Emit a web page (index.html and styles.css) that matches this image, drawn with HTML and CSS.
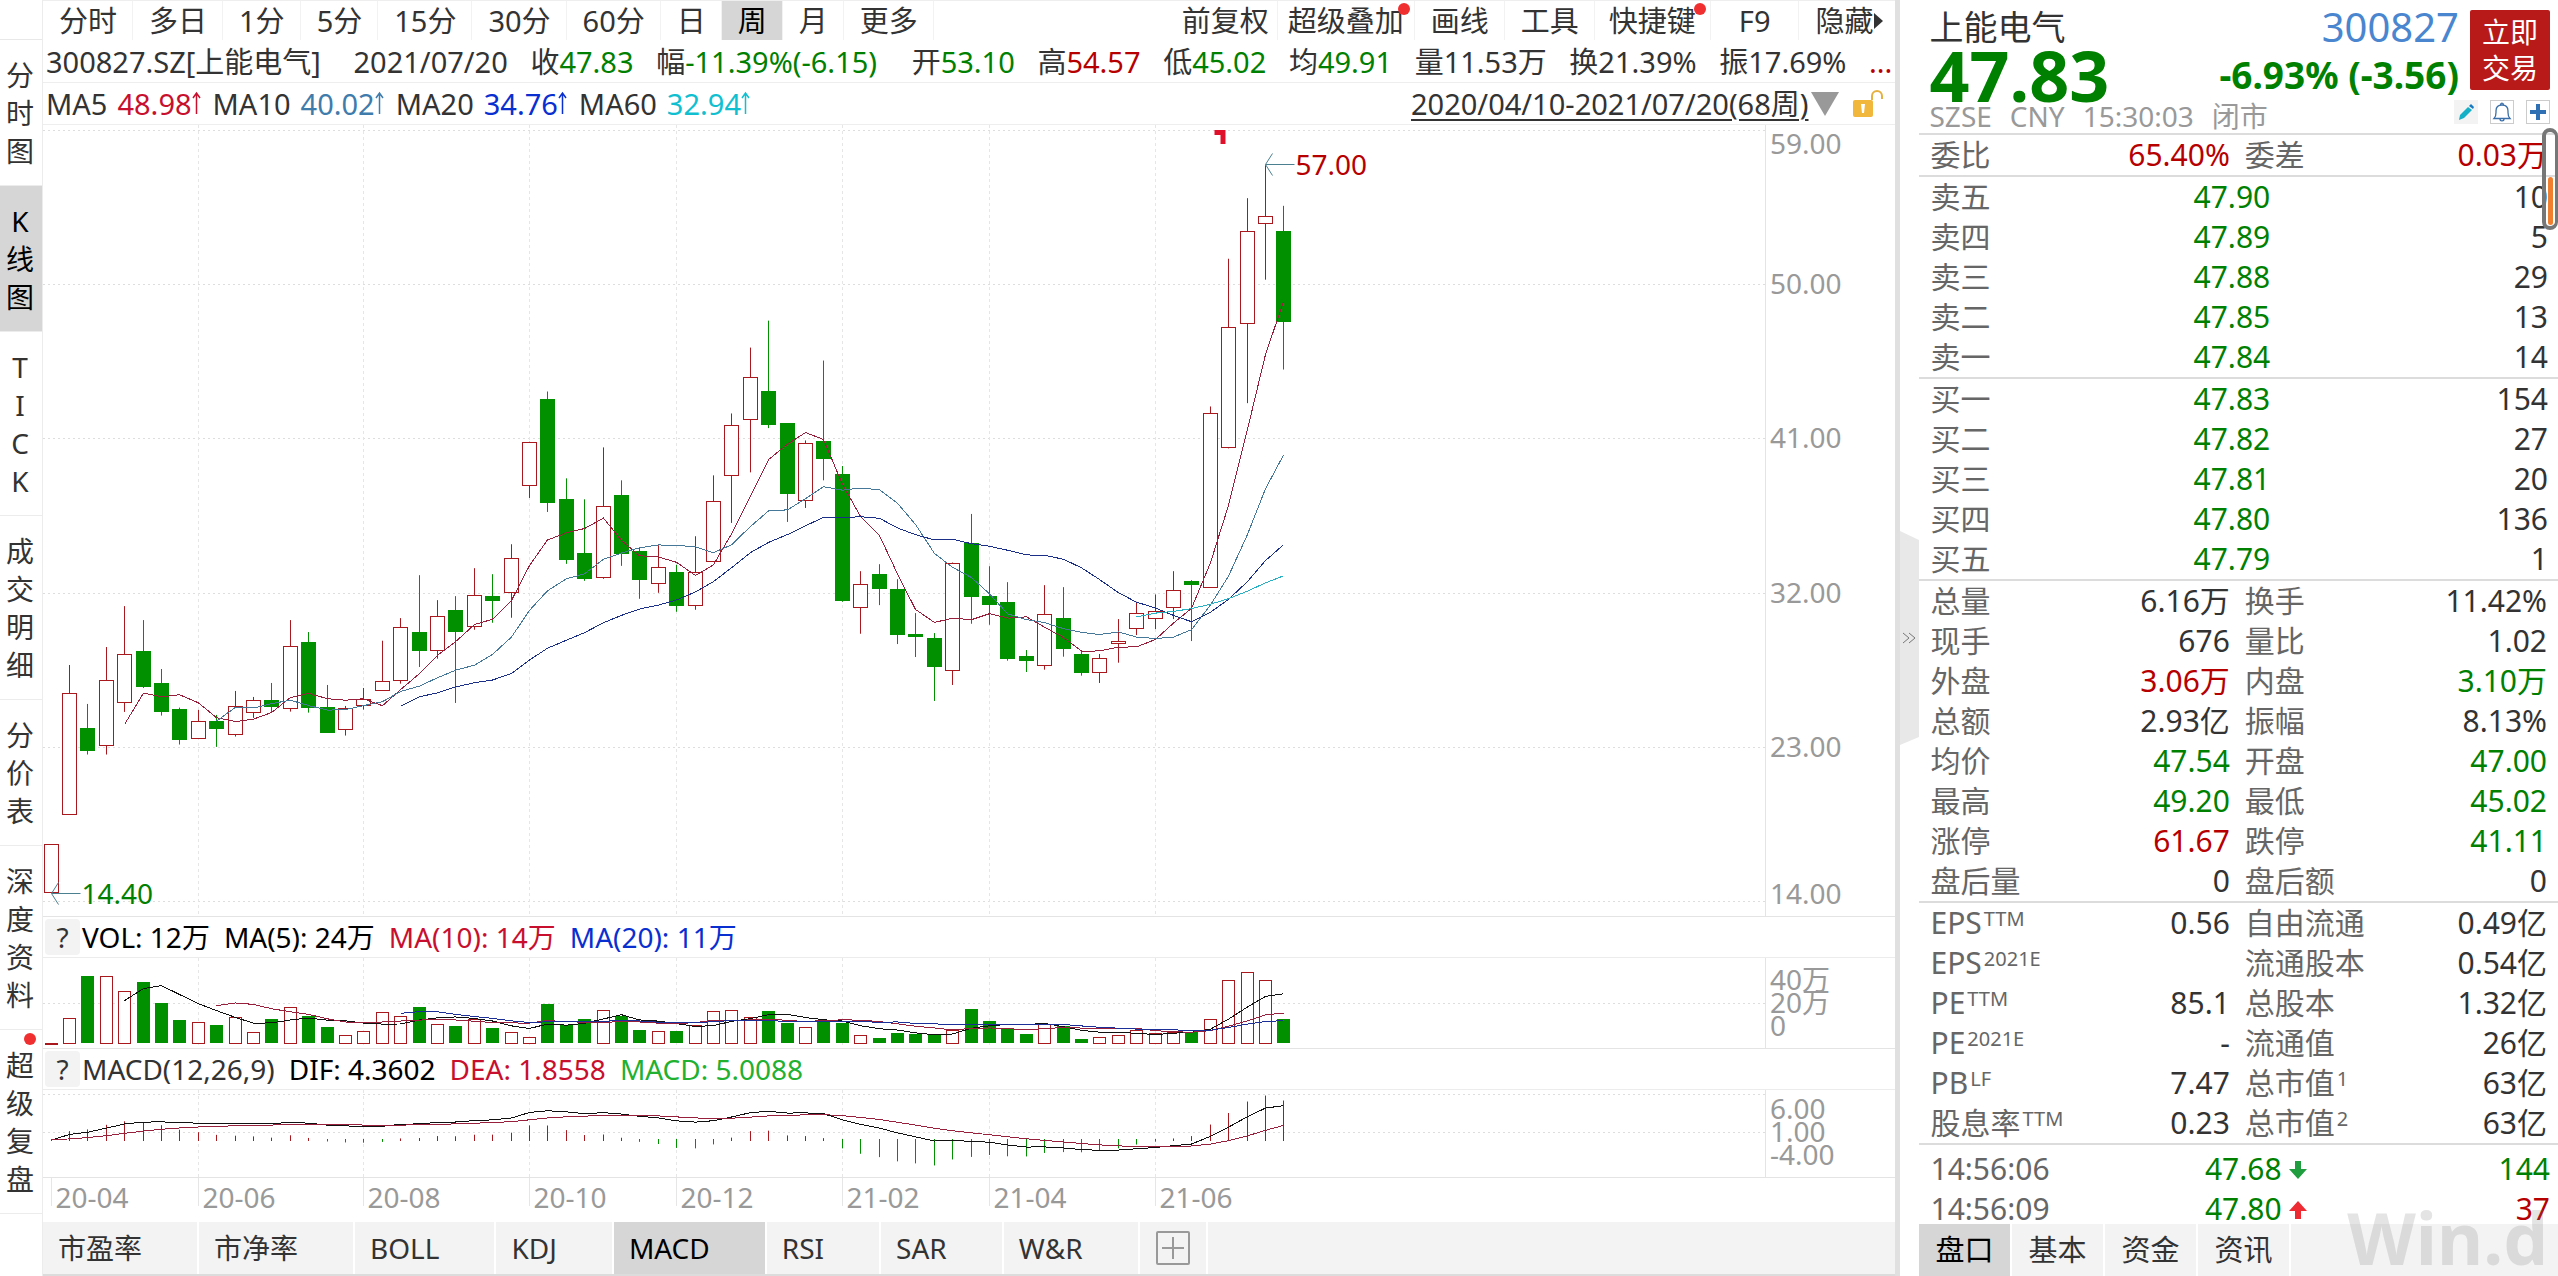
FILE: index.html
```html
<!DOCTYPE html>
<html lang="zh-CN">
<head>
<meta charset="utf-8">
<title>上能电气 300827</title>
<link rel="stylesheet" href="styles.css">
</head>
<body>
<div class="app">
  <nav class="side">
    <div class="side-head"></div>
    <button class="side-tab">分时图</button>
    <button class="side-tab on">K线图</button>
    <button class="side-tab">T<br>I<br>C<br>K</button>
    <button class="side-tab">成交明细</button>
    <button class="side-tab">分价表</button>
    <button class="side-tab">深度资料</button>
    <button class="side-tab dot">超级复盘</button>
  </nav>

  <main class="chart">
    <div class="toolbar">
      <button>分时</button><button>多日</button><button>1分</button><button>5分</button><button>15分</button><button>30分</button><button>60分</button><button>日</button><button class="on">周</button><button>月</button><button>更多</button>
      <span class="spacer"></span>
      <button class="tight">前复权</button><button class="snug badge">超级叠加</button><button>画线</button><button>工具</button><button class="mid badge">快捷键</button><button class="wide">F9</button><button class="hide">隐藏<svg width="9" height="16" viewBox="0 0 9 16"><path d="M0 0L9 8L0 16Z" fill="#333"/></svg></button>
    </div>
    <div class="quote">
      <span class="code">300827.SZ[上能电气]</span>
      <span>2021/07/20</span>
      <span>收<b class="dn">47.83</b></span>
      <span class="pct">幅<b class="dn">-11.39%(-6.15)</b></span>
      <span>开<b class="dn">53.10</b></span>
      <span>高<b class="up">54.57</b></span>
      <span>低<b class="dn">45.02</b></span>
      <span>均<b class="dn">49.91</b></span>
      <span>量11.53万</span>
      <span>换21.39%</span>
      <span>振17.69%</span>
      <span class="up">...</span>
    </div>
    <div class="mas">
      <span>MA5</span><span class="val m5">48.98<svg class="arr" viewBox="0 0 9 24"><path d="M4.500 23V2M1 7L4.500 2L8 7"/></svg></span>
      <span>MA10</span><span class="val m10">40.02<svg class="arr" viewBox="0 0 9 24"><path d="M4.500 23V2M1 7L4.500 2L8 7"/></svg></span>
      <span>MA20</span><span class="val m20">34.76<svg class="arr" viewBox="0 0 9 24"><path d="M4.500 23V2M1 7L4.500 2L8 7"/></svg></span>
      <span>MA60</span><span class="val m60">32.94<svg class="arr" viewBox="0 0 9 24"><path d="M4.500 23V2M1 7L4.500 2L8 7"/></svg></span>
      <span class="spacer"></span>
      <a href="#range" class="range">2020/04/10-2021/07/20(68周)</a>
      <svg class="caret" width="28" height="24" viewBox="0 0 28 24"><path d="M0 0H28L14 24Z" fill="#999"/></svg>
      <svg class="lock" width="30" height="28" viewBox="0 0 30 28"><rect x="0" y="10" width="20" height="17" rx="2" fill="#f0b73c"/><path d="M19 10V6a5 5 0 0 1 10 0V9" fill="none" stroke="#e6b040" stroke-width="2"/><path d="M8 14h4l-1 9h-2z" fill="#fff"/></svg>
    </div>
    <div class="plot main-plot"><svg id="kline"></svg></div>
    <div class="legend">
      <button class="help">?</button>
      <span class="k">VOL: 12万</span><span class="k">MA(5): 24万</span><span class="m5">MA(10): 14万</span><span class="m20">MA(20): 11万</span>
    </div>
    <div class="plot vol-plot"><svg id="volume"></svg></div>
    <div class="legend">
      <button class="help">?</button>
      <span>MACD(12,26,9)</span><span class="k">DIF: 4.3602</span><span class="m5">DEA: 1.8558</span><span class="macd">MACD: 5.0088</span>
    </div>
    <div class="plot macd-plot"><svg id="macd"></svg></div>
    <div class="plot dates"><svg id="dates"></svg></div>
    <div class="tabs">
      <button>市盈率</button><button>市净率</button><button>BOLL</button><button>KDJ</button><button class="on">MACD</button><button>RSI</button><button>SAR</button><button>W&amp;R</button><button class="add" aria-label="添加指标"><svg width="34" height="34" viewBox="0 0 34 34"><rect x="1" y="1" width="32" height="32" rx="1" fill="none" stroke="#999" stroke-width="2"/><path d="M17 6V28M6 17H28" stroke="#999" stroke-width="2"/></svg></button>
    </div>
  </main>

  <button class="divider" aria-label="收起"><svg width="19" height="214" viewBox="0 0 19 214"><path d="M0 0L19 9V206L0 214Z" fill="#e8e8e8"/><path d="M3 102L9 107L3 112M9 102L15 107L9 112" fill="none" stroke="#777"/></svg></button>

  <aside class="panel">
    <header class="head">
      <div class="info">
        <div class="row1"><span class="name">上能电气</span><span class="num">300827</span></div>
        <div class="row2"><span class="price">47.83</span><span class="chg">-6.93% (-3.56)</span></div>
      </div>
      <button class="trade">立即<br>交易</button>
      <div class="status">
        <span>SZSE</span><span>CNY</span><span>15:30:03</span><span>闭市</span>
        <div class="icons">
          <svg width="24" height="24" viewBox="0 0 24 24"><rect width="24" height="24" fill="#f3f3f3"/><path d="M5 20L6 15L14 7L18 10L10 18Z" fill="#14b0c8"/><path d="M15 6L17 4L20 7L19 9Z" fill="#1479c0"/></svg>
          <svg width="24" height="24" viewBox="0 0 24 24"><rect x=".5" y=".5" width="23" height="23" fill="#fff" stroke="#ccc"/><path d="M4 18.500H20C17.500 16 18 14 18 11C18 7 15.500 5 12 5C8.500 5 6 7 6 11C6 14 6.500 16 4 18.500ZM10.500 5C10.500 2.500 13.500 2.500 13.500 5M10 19C10 21.500 14 21.500 14 19" fill="none" stroke="#3a6ea8" stroke-width="1.300"/></svg>
          <svg width="24" height="24" viewBox="0 0 24 24"><rect x=".5" y=".5" width="23" height="23" fill="#fff" stroke="#ccc"/><path d="M12 4V20M4 12H20" stroke="#2f6fb3" stroke-width="4"/></svg>
        </div>
      </div>
    </header>

    <table class="grid4">
      <tr><th>委比</th><td class="up">65.40%</td><th>委差</th><td class="up">0.03万</td></tr>
    </table>
    <table class="levels">
      <tr><th>卖五</th><td class="dn">47.90</td><td>10</td></tr>
      <tr><th>卖四</th><td class="dn">47.89</td><td>5</td></tr>
      <tr><th>卖三</th><td class="dn">47.88</td><td>29</td></tr>
      <tr><th>卖二</th><td class="dn">47.85</td><td>13</td></tr>
      <tr><th>卖一</th><td class="dn">47.84</td><td>14</td></tr>
    </table>
    <table class="levels">
      <tr><th>买一</th><td class="dn">47.83</td><td>154</td></tr>
      <tr><th>买二</th><td class="dn">47.82</td><td>27</td></tr>
      <tr><th>买三</th><td class="dn">47.81</td><td>20</td></tr>
      <tr><th>买四</th><td class="dn">47.80</td><td>136</td></tr>
      <tr><th>买五</th><td class="dn">47.79</td><td>1</td></tr>
    </table>
    <table class="grid4">
      <tr><th>总量</th><td>6.16万</td><th>换手</th><td>11.42%</td></tr>
      <tr><th>现手</th><td>676</td><th>量比</th><td>1.02</td></tr>
      <tr><th>外盘</th><td class="up">3.06万</td><th>内盘</th><td class="dn">3.10万</td></tr>
      <tr><th>总额</th><td>2.93亿</td><th>振幅</th><td>8.13%</td></tr>
      <tr><th>均价</th><td class="dn">47.54</td><th>开盘</th><td class="dn">47.00</td></tr>
      <tr><th>最高</th><td class="dn">49.20</td><th>最低</th><td class="dn">45.02</td></tr>
      <tr><th>涨停</th><td class="up">61.67</td><th>跌停</th><td class="dn">41.11</td></tr>
      <tr><th>盘后量</th><td>0</td><th>盘后额</th><td>0</td></tr>
    </table>
    <table class="grid4">
      <tr><th>EPS<sup>TTM</sup></th><td>0.56</td><th>自由流通</th><td>0.49亿</td></tr>
      <tr><th>EPS<sup>2021E</sup></th><td></td><th>流通股本</th><td>0.54亿</td></tr>
      <tr><th>PE<sup>TTM</sup></th><td>85.1</td><th>总股本</th><td>1.32亿</td></tr>
      <tr><th>PE<sup>2021E</sup></th><td>-</td><th>流通值</th><td>26亿</td></tr>
      <tr><th>PB<sup>LF</sup></th><td>7.47</td><th>总市值<sup>1</sup></th><td>63亿</td></tr>
      <tr><th>股息率<sup>TTM</sup></th><td>0.23</td><th>总市值<sup>2</sup></th><td>63亿</td></tr>
    </table>
    <div class="ticks">
      <table>
        <tr><th>14:56:06</th><td class="dn">47.68<svg width="18" height="18" viewBox="0 0 18 18"><path d="M6 0H12V8H18L9 18L0 8H6Z" fill="#1f9d3f"/></svg></td><td class="dn">144</td></tr>
        <tr><th>14:56:09</th><td class="dn">47.80<svg width="18" height="18" viewBox="0 0 18 18"><path d="M9 0L18 10H12V18H6V10H0Z" fill="#ee2a33"/></svg></td><td class="up">37</td></tr>
      </table>
    </div>
    <div class="ptabs"><button class="on">盘口</button><button>基本</button><button>资金</button><button>资讯</button></div>
    <div class="brand">Win.d</div>
    <div class="scroll"><div class="thumb"></div></div>
  </aside>
</div>
<script src="chart.js"></script>
</body>
</html>
```
FILE: styles.css
```css
* { box-sizing: border-box; }
body {
  margin: 0;
  background: #fff;
  color: #333;
  font: 29px/40px "Noto Sans", "Noto Sans CJK SC", sans-serif;
  white-space: nowrap;
  overflow: hidden;
}
button { border: 0; margin: 0; padding: 0; background: none; color: inherit; font: inherit; }
b { font-weight: 400; }
.up { color: #b60000; }
.dn { color: #008000; }
.app { display: flex; height: 100vh; }
.spacer { flex: 1; }

/* left rail */
.side { flex: none; width: 43px; display: flex; flex-direction: column; border-right: 1px solid #ececec; }
.side-head { height: 40px; border-bottom: 1px solid #e8e8e8; }
.side-tab {
  position: relative;
  padding: 16px 8px 15px 6px;
  border-bottom: 1px solid #ececec;
  font-size: 28px;
  line-height: 38px;
  white-space: normal;
  word-break: break-all;
  width: 42px;
}
.side-tab.on { background: #d6d6d6; color: #000; }
.side-tab.dot::before, .badge::before {
  content: "";
  position: absolute;
  width: 12px;
  height: 12px;
  border-radius: 50%;
  background: #f03030;
}
.side-tab.dot::before { right: 6px; top: 3px; }

/* chart column */
.chart { flex: 1; min-width: 0; display: flex; flex-direction: column; }
.toolbar { display: flex; height: 40px; border-top: 1px solid #eee; }
.toolbar button { position: relative; padding: 0 15px 0 16px; line-height: 39px; border-right: 1px solid #f2f2f2; }
.toolbar .on { background: #d6d6d6; color: #000; }
.toolbar .tight { padding: 0 8px; }
.toolbar .snug { padding: 0 10px; }
.toolbar .mid { padding: 0 14px; }
.toolbar .wide { padding: 0 28px; }
.toolbar .hide { padding: 0 12px 0 16px; display: flex; align-items: center; border: 0; }
.badge::before { right: 4px; top: 2px; }
.quote { display: flex; justify-content: space-between; height: 43px; padding: 0 2px 0 3px; line-height: 43px; border-bottom: 1px solid #eee; }
.quote .code { margin-right: 10px; }
.quote .pct { margin-right: 12px; }
.mas { display: flex; align-items: center; height: 42px; padding: 0 12px 0 3px; line-height: 41px; border-bottom: 1px solid #eee; }
.mas .val { margin: 0 12px 0 10px; }
.arr { width: 9px; height: 24px; fill: none; stroke: currentColor; stroke-width: 1.500px; }
.m5 { color: #c8102e; }
.m10 { color: #3f7cac; }
.m20 { color: #0a2fd0; }
.m60 { color: #10c0d0; }
.macd { color: #22b030; }
.k { color: #000; }
.range { color: inherit; text-decoration-thickness: 2px; text-underline-offset: 4px; }
.caret { margin: 0 14px 0 2px; }
.plot { flex: none; border-bottom: 1px solid #e4e4e4; overflow: hidden; }
.plot svg { display: block; width: 100%; height: 100%; font-size: 28px; }
.plot polyline { shape-rendering: crispEdges; }
.main-plot { flex: 1; min-height: 0; }
.vol-plot { height: 91px; }
.macd-plot { height: 88px; }
.dates { height: 44px; border: 0; }
.legend { display: flex; align-items: center; height: 41px; gap: 14px; padding: 0 2px; font-size: 28px; border-bottom: 1px solid #ececec; }
.help { width: 35px; height: 36px; margin-right: -12px; line-height: 36px; background: #f3f3f3; border-radius: 4px; }
.tabs { display: flex; height: 54px; background: #f3f3f3; border-bottom: 2px solid #dcdcdc; font-size: 28px; }
.tabs button { padding: 0 55px 0 15px; border-right: 2px solid #fff; line-height: 52px; }
.tabs .on { background: #d6d6d6; color: #000; }
.tabs .add { display: flex; align-items: center; padding: 0 16px; }

/* splitter */
.divider { flex: none; width: 24px; display: flex; align-items: center; border-left: 5px solid #e0e0e0; }

/* quote panel */
.panel { position: relative; flex: none; width: 25%; display: flex; flex-direction: column; font-size: 30px; }
.head { display: grid; grid-template-columns: 1fr 80px; height: 133px; padding: 10px 8px 0 11px; column-gap: 11px; grid-template-rows: 80px 43px; }
.row1, .row2 { display: flex; justify-content: space-between; align-items: center; }
.row1 { height: 34px; }
.row2 { height: 62px; }
.name { font-size: 34px; }
.num { font-size: 40px; color: #4a86d0; }
.price { font-size: 70px; font-weight: 700; color: #008000; }
.chg { font-size: 37px; font-weight: 700; color: #008000; }
.trade { height: 80px; background: #b81a1a; border-radius: 2px; color: #fff; font-size: 28px; line-height: 36px; }
.status { grid-column: 1 / 3; display: flex; align-items: center; gap: 18px; font-size: 28px; color: #999; padding-top: 8px; }
.icons { display: flex; align-items: center; gap: 12px; margin: -8px 0 0 auto; }
.panel table { width: 100%; border-collapse: collapse; table-layout: fixed; }
.panel > table { border-top: 2px solid #dcdcdc; }
.panel tr { height: 40px; }
.panel th { font-weight: 400; text-align: left; color: #666; padding: 0 0 0 12px; }
.panel td { text-align: right; padding: 0; }
.grid4 th:first-child { width: 26%; }
.grid4 td:nth-child(2) { width: 23%; padding-right: 2px; }
.grid4 th:nth-child(3) { padding-left: 13px; }
.grid4 td:last-child { padding-right: 11px; }
.levels td:nth-child(2) { width: 22%; }
.levels th { width: 33%; }
.levels td:last-child { padding-right: 10px; }
.panel sup { font-size: 20px; line-height: 20px; vertical-align: 8px; margin-left: 2px; }
.ticks { flex: 1; min-height: 0; overflow: hidden; padding-top: 4px; border-top: 2px solid #dcdcdc; }
.ticks th { width: 33%; }
.ticks td:nth-child(2) { width: 28%; }
.ticks td:last-child { padding-right: 8px; }
.ticks svg { margin: 0 2px 1px 7px; }
.ptabs { flex: none; display: flex; height: 52px; background: #f3f3f3; font-size: 29px; }
.ptabs button { padding: 0 16px 0 17px; line-height: 52px; border-right: 2px solid #fff; }
.ptabs .on { background: #d6d6d6; color: #000; }
.brand { position: absolute; right: 10px; bottom: 0; font-size: 71px; line-height: 76px; font-weight: 700; color: rgba(120, 120, 120, .2); }
.scroll { position: absolute; right: 0; top: 128px; width: 16px; height: 102px; padding: 45px 2px 1px; border: 4px solid #777; border-right-width: 3px; border-radius: 8px; }
.thumb { height: 48px; border-radius: 3px; background: #f08030; }
```
FILE: chart.js
```js
// Weekly candles: [rising, bodyTop, bodyBottom, high, low] in price-grid steps.
const BARS = [
  [1,1696,1841,1696,1841],[1,1243,1607,1158,1607],[0,1347,1415,1275,1427],[1,1204,1400,1104,1427],
  [1,1126,1271,981,1299],[0,1116,1223,1023,1227],[0,1213,1301,1170,1310],[0,1290,1382,1286,1397],
  [1,1327,1379,1293,1379],[0,1326,1349,1308,1404],[1,1281,1364,1236,1373],[1,1264,1301,1254,1317],
  [0,1263,1283,1212,1301],[1,1102,1289,1023,1298],[0,1089,1286,1059,1301],[0,1284,1361,1218,1361],
  [1,1287,1349,1281,1370],[1,1261,1280,1227,1292],[1,1207,1235,1085,1235],[1,1045,1204,1017,1214],
  [0,1060,1118,888,1164],[1,1012,1115,963,1139],[0,993,1058,951,1272],[1,949,1043,867,1052],
  [0,951,965,885,1031],[1,836,937,795,1016],[1,487,616,487,656],[0,360,673,336,698],
  [0,660,844,597,854],[0,822,899,660,905],[1,679,892,504,899],[0,648,824,603,860],
  [0,816,902,804,959],[1,862,910,798,941],[0,879,980,857,998],[1,877,976,771,992],
  [1,664,844,588,844],[1,436,586,402,731],[1,293,418,204,579],[0,333,434,123,446],
  [0,432,644,432,728],[1,490,661,483,686],[0,486,540,243,603],[0,585,968,560,968],
  [1,916,986,876,1064],[0,885,930,855,978],[0,930,1067,900,1095],[0,1065,1074,1002,1134],
  [0,1077,1164,1062,1266],[1,850,1171,850,1218],[0,792,954,704,1034],[0,951,977,861,1037],
  [0,969,1140,909,1145],[0,1131,1145,1113,1179],[1,1006,1160,918,1172],[0,1017,1109,924,1133],
  [0,1125,1181,1117,1190],[1,1138,1181,1125,1212],[1,1087,1094,1020,1151],[1,1003,1048,968,1068],
  [1,997,1018,946,1050],[1,934,986,876,1020],[0,906,918,903,1086],[1,400,922,381,922],
  [1,142,502,-63,507],[1,-146,130,-245,371],[1,-191,-169,-344,0],[0,-147,126,-222,270]
];
const VOLUME = [1,76,200,202,157,182,119,68,64,53,79,34,71,109,81,47,25,37,94,82,107,58,50,71,44,34,19,
  116,55,71,100,82,38,37,35,55,97,100,79,95,59,49,67,59,25,14,29,26,28,38,101,65,46,26,57,50,11,19,25,
  40,31,32,32,73,190,214,190,71];
const MONTHS = [[0,"20-04"],[8,"20-06"],[17,"20-08"],[26,"20-10"],[34,"20-12"],[43,"21-02"],[51,"21-04"],[60,"21-06"]];

const price = s => 50 - (s - 13.5) / 51.5;
const CLOSE = BARS.map(b => price(b[0] ? b[1] : b[2]));

const AXIS = 130;
const RED = "#a8181c", GREEN = "#009000", GRID = "#dedede";

const sma = (v, n) => v.map((_, i) => i < n - 1 ? null : v.slice(i - n + 1, i + 1).reduce((a, b) => a + b) / n);
const ema = (v, n) => { let e = v[0]; return v.map(x => (e += (x - e) * 2 / (n + 1))); };

const line = (x1, y1, x2, y2, c, extra = "") =>
  `<line x1="${x1}" y1="${y1}" x2="${x2}" y2="${y2}" stroke="${c}" ${extra}/>`;
const label = (x, y, t, c) => `<text x="${x}" y="${y}" fill="${c}" dy="10">${t}</text>`;
const curve = (v, X, Y, c) =>
  `<polyline fill="none" stroke="${c}" points="${v.map((p, i) => p === null ? "" : X(i) + "," + Y(p)).join(" ")}"/>`;

function frame(id) {
  const el = document.getElementById(id);
  const w = el.clientWidth, h = el.clientHeight, pw = w - AXIS;
  const X = i => Math.floor((8 + 18.39 * i) * pw / 1721) + .5;
  return { el, w, h, pw, X };
}
function grid(f, ys) {
  let s = line(f.pw + .5, 0, f.pw + .5, f.h, "#e4e4e4");
  ys.forEach(y => s += line(0, Math.round(y) + .5, f.pw, Math.round(y) + .5, GRID, 'stroke-dasharray="2 3"'));
  MONTHS.slice(1).forEach(([i]) => s += line(f.X(i), 0, f.X(i), f.h, "#e6e6e6", 'stroke-dasharray="3 3"'));
  return s;
}
function box(x, y, h, rising, w = 14) {
  return rising
    ? `<rect x="${x - w / 2}" y="${Math.round(y) + .5}" width="${w}" height="${Math.max(1, Math.round(h))}" fill="#fff" stroke="${RED}"/>`
    : `<rect x="${x - w / 2 - .5}" y="${Math.round(y)}" width="${w + 1}" height="${Math.max(1, Math.round(h))}" fill="${GREEN}"/>`;
}

function drawKline() {
  const f = frame("kline"), X = f.X;
  const Y = p => (59.29 - p) / 46.16 * f.h;
  const ticks = [59, 50, 41, 32, 23, 14];
  let s = grid(f, ticks.map(Y));
  BARS.forEach((b, i) => {
    s += line(X(i), Y(price(b[3])), X(i), Y(price(b[4])), b[0] ? RED : GREEN);
    s += box(X(i), Y(price(b[1])), Y(price(b[2])) - Y(price(b[1])), b[0]);
  });
  s += curve(sma(CLOSE, 5), X, Y, "#98203c") + curve(sma(CLOSE, 10), X, Y, "#46789a") +
       curve(sma(CLOSE, 20), X, Y, "#1c2f88") + curve(sma(CLOSE, 60), X, Y, "#28b0c4");
  ticks.forEach((p, k) => s += label(f.pw + 5, Y(p) + (k === 0 ? 14 : k === 5 ? -7 : 0), p + ".00", "#999"));
  const arrow = (x, y) => `<path d="M${x + 29} ${y}H${x}M${x + 7} ${y - 11}L${x} ${y}L${x + 7} ${y + 11}" fill="none" stroke="#4a8090"/>`;
  const hi = Math.round(Y(57)) + .5, lo = Math.floor(Y(14.4)) - .5;
  s += arrow(X(66), hi) + label(X(66) + 30, hi, "57.00", "#b60000");
  s += arrow(X(0), lo) + label(X(0) + 30, lo, "14.40", "#008000");
  s += `<path d="M${X(63) + 4} 5h11v14h-5v-9h-6z" fill="#e0102a"/>`;
  f.el.innerHTML = s;
}

function drawVolume() {
  const f = frame("volume"), X = f.X;
  const Y = v => (255 - v) / 270 * f.h;
  let s = grid(f, [f.h / 2]);
  VOLUME.forEach((v, i) => s += box(X(i), Y(v), Y(0) - Y(v), BARS[i][0], 12));
  s += curve(sma(VOLUME, 5), X, Y, "#111") + curve(sma(VOLUME, 10), X, Y, "#98203c") + curve(sma(VOLUME, 20), X, Y, "#1c2f98");
  ["40万", "20万", "0"].forEach((t, k) => s += label(f.pw + 5, f.h / 2 - 23 + 23 * k, t, "#999"));
  f.el.innerHTML = s;
}

function drawMacd() {
  const f = frame("macd"), X = f.X;
  const Y = v => (50 - v * 7.9) / 87 * f.h;
  const slow = ema(CLOSE, 26), dif = ema(CLOSE, 12).map((v, i) => v - slow[i]), dea = ema(dif, 9);
  let s = grid(f, [4, 42]);
  dif.forEach((d, i) => {
    const m = 2 * (d - dea[i]);
    s += line(X(i), Y(0) + (m < 0 ? -1 : 1), X(i), Y(m), m < 0 ? GREEN : RED);
  });
  s += curve(dif, X, Y, "#111") + curve(dea, X, Y, "#98203c");
  ["6.00", "1.00", "-4.00"].forEach((t, k) => s += label(f.pw + 5, f.h / 2 - 25 + 23 * k, t, "#999"));
  f.el.innerHTML = s;
}

function drawDates() {
  const f = frame("dates");
  f.el.innerHTML = MONTHS.map(([i, t]) =>
    line(f.X(i), 0, f.X(i), 28, "#e6e6e6") + label(f.X(i) + 4, 20, t, "#999")).join("");
}

function draw() { drawKline(); drawVolume(); drawMacd(); drawDates(); }
addEventListener("resize", draw);
draw();
```
